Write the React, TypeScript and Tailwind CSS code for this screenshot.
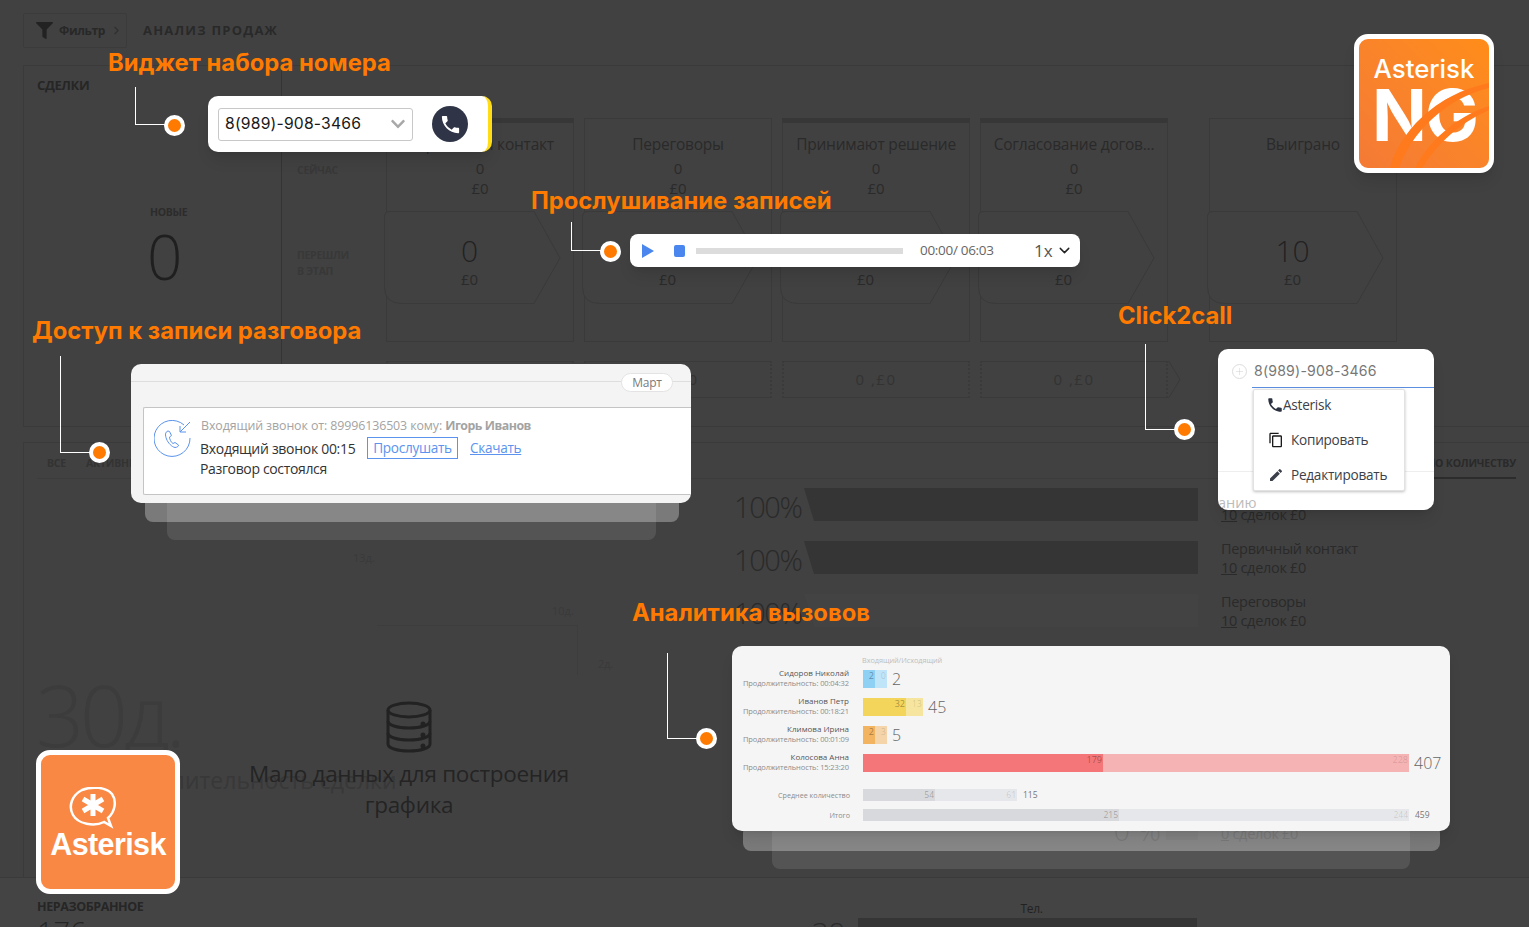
import React from "react";
import { ChevronDown, ChevronRight, Plus } from "lucide-react";
import { FaChevronDown, FaFilter } from "react-icons/fa";
import { MdContentCopy, MdEdit, MdPhone } from "react-icons/md";

const stages = [
  { title: "Первичный контакт", moved: "0", bar: true },
  { title: "Переговоры", moved: "0", bar: false },
  { title: "Принимают решение", moved: "0", bar: true },
  { title: "Согласование догов...", moved: "0", bar: true },
];

const ArrowBox = ({ value }: { value: string }) => (
  <div className="relative -ml-[3px] flex h-[93px] w-[177px] flex-col items-center pr-[6px] pt-[22px]">
    <svg className="absolute inset-0" width="177" height="93" viewBox="0 0 177 93" fill="none">
      <path d="M6 .5H150L176 47 150 92.5H18Q.5 92.5 .5 76V6Q.5 .5 6 .5Z" stroke="#3a3a3a" fill="#414141" />
    </svg>
    <span className="relative text-[30px] leading-[36px] font-light text-[#222222]">{value}</span>
    <span className="relative text-[15px] leading-[20px] text-[#2a2a2a]">£0</span>
  </div>
);

const StageColumn = ({
  title,
  moved,
  bar,
  won,
}: {
  title: string;
  moved: string;
  bar: boolean;
  won?: boolean;
}) => (
  <div className={`h-[224px] w-[188px] border border-[#3a3a3a] ${bar ? "border-t-[5px] border-t-[#373737]" : ""}`}>
    <div className={`flex flex-col items-center ${bar ? "h-[88px] pt-[11px]" : "h-[92px] pt-[15px]"}`}>
      <span className="text-[15.5px] leading-[20px] tracking-[-0.22px] whitespace-nowrap text-[#2a2a2a]">{title}</span>
      {!won && (
        <>
          <span className="mt-[4px] text-[15px] leading-[20px] text-[#2a2a2a]">0</span>
          <span className="text-[15px] leading-[20px] text-[#2a2a2a]">£0</span>
        </>
      )}
    </div>
    <ArrowBox value={moved} />
  </div>
);

const FunnelBar = ({ faded }: { faded?: boolean }) => (
  <div className="flex h-[33px] items-center">
    <span className="mt-[4px] w-[70px] text-[29px] font-light tracking-[-1.4px] text-[#2a2a2a]">100%</span>
    <div
      className={`h-[33px] flex-1 [clip-path:polygon(0_0,100%_0,100%_100%,10px_100%)] ${faded ? "bg-[#434343]" : "bg-[#353535]"}`}
    />
  </div>
);

const DealsLine = ({ title, count }: { title?: string; count: string }) => (
  <div className="-ml-[1px] text-[14.5px] leading-[19px] tracking-[-0.3px] text-[#2a2a2a]">
    {title && <div>{title}</div>}
    <div>
      <span className="underline">{count}</span> сделок £0
    </div>
  </div>
);

const Background = () => (
  <div className="flex h-[927px] flex-col pl-[23px] pt-[13px] font-['Open_Sans',sans-serif]">
    <div className="flex shrink-0 items-center gap-[16px]">
      <div className="flex h-[35px] w-[104px] items-center rounded-[2px] border border-[#3b3b3b] pl-[12px] text-[#222222]">
        <FaFilter size={17} />
        <span className="ml-[6px] text-[12px] font-bold tracking-[-0.4px] text-[#282828]">Фильтр</span>
        <ChevronRight size={13} className="ml-[5px] text-[#2f2f2f]" />
      </div>
      <span className="text-[13px] font-bold tracking-[1.2px] text-[#292929]">АНАЛИЗ ПРОДАЖ</span>
    </div>

    <div className="mt-[17px] flex h-[362px] shrink-0 border-t border-l border-b border-[#3a3a3a]">
      <div className="flex w-[258px] flex-col border-r border-[#343434] pl-[13px] pt-[10px]">
        <span className="text-[13px] font-bold tracking-[-0.4px] text-[#262626]">СДЕЛКИ</span>
        <span className="mt-[109px] ml-[113px] text-[10.5px] font-bold tracking-[-0.3px] text-[#2c2c2c]">НОВЫЕ</span>
        <span className="ml-[110px] text-[62px] leading-[72px] font-light text-[#1f1f1f]">0</span>
      </div>
      <div className="flex-1 pl-[15px] pt-[52px]">
        <div className="flex">
          <div className="w-[89px] pt-[44px] text-[10.5px] leading-[16px] font-bold tracking-[-0.3px] text-[#383838]">
            <div>СЕЙЧАС</div>
            <div className="mt-[69px]">ПЕРЕШЛИ</div>
            <div>В ЭТАП</div>
          </div>
          <div className="flex gap-[10px]">
            {stages.map((s) => (
              <StageColumn key={s.title} {...s} />
            ))}
          </div>
          <div className="ml-[41px]">
            <StageColumn title="Выиграно" moved="10" bar={false} won />
          </div>
        </div>
        <div className="ml-[89px] mt-[19px] flex items-center gap-[10px]">
          {["0 ,£0", "0 ,£0", "0 ,£0", "0 ,£0"].map((v, i) => (
            <div
              key={i}
              className="flex h-[37px] w-[188px] items-center justify-center border-y border-x-2 border-y-[#3a3a3a] border-x-[#3a3a3a] [border-left-style:dotted] [border-right-style:dotted] text-[15px] tracking-[1.5px] text-[#333333]"
            >
              {v}
            </div>
          ))}
          <svg className="-ml-[10px]" width="13" height="37" viewBox="0 0 13 37" fill="none" stroke="#3a3a3a">
            <path d="M0 .5H1L12 18.5 1 36.5H0" />
          </svg>
        </div>
      </div>
    </div>

    <div className="mt-[15px] flex h-[435px] shrink-0 flex-col border-t border-l border-[#3a3a3a]">
      <div className="mx-[13px] flex h-[36px] items-start justify-between border-b border-[#3c3c3c] pt-[13px] text-[10.5px] font-bold tracking-[-0.2px] text-[#333333]">
        <div className="flex gap-[20px] pl-[10px]">
          <span>ВСЕ</span>
          <span>АКТИВНЫЕ</span>
        </div>
        <span className="h-[23px] border-b-[2px] border-[#2c2c2c] text-[#2a2a2a]">ПО КОЛИЧЕСТВУ</span>
      </div>
      <div className="flex flex-1">
        <div className="relative w-[710px]">
          <span className="absolute left-[329px] top-[71px] text-[11px] text-[#3a3a3a]">13д.</span>
          <span className="absolute left-[528px] top-[124px] text-[11px] text-[#3a3a3a]">10д.</span>
          <span className="absolute left-[574px] top-[177px] text-[11px] text-[#3a3a3a]">2д.</span>
          <div className="absolute left-[353px] top-[146px] h-[50px] w-[201px] border-t border-r border-[#3d3d3d]" />
          <div className="flex h-full pt-[186px]">
            <div className="w-[420px] pl-[12px]">
              <div className="text-[84px] leading-[100px] font-light tracking-[-4px] text-[#3c3c3c]">30д.</div>
              <div className="ml-[120px] text-[23px] leading-[30px] whitespace-nowrap text-[#383838]">
                Длительность сделки
              </div>
            </div>
          </div>
          <div className="absolute left-[210px] top-[222px] flex w-[350px] flex-col items-center">
            <svg width="46" height="52" viewBox="0 0 46 52" fill="none" stroke="#222222" strokeWidth="3">
              <ellipse cx="23" cy="9" rx="21" ry="7" />
              <path d="M2 9V43C2 47 11 50 23 50S44 47 44 43V9" />
              <path d="M2 20C2 24 11 27 23 27S44 24 44 20" />
              <path d="M2 32C2 36 11 39 23 39S44 36 44 32" />
              <circle cx="37" cy="23" r="1" fill="#222222" />
              <circle cx="37" cy="34" r="1" fill="#222222" />
              <circle cx="37" cy="45" r="1" fill="#222222" />
            </svg>
            <div className="mt-[5px] whitespace-nowrap text-center text-[22.5px] leading-[31px] tracking-[-0.3px] text-[#242424]">
              Мало данных для построения
              <br />
              графика
            </div>
          </div>
        </div>
        <div className="w-[464px] pt-[9px]">
          <div className="flex flex-col gap-[20px]">
            <FunnelBar />
            <FunnelBar />
            <FunnelBar faded />
          </div>
          <div className="mt-[193px] flex h-[20px] items-center justify-end">
            <span className="mr-[5px] text-[29px] font-light text-[#2c2c2c]">0 %</span>
            <div className="h-[20px] w-[32px] bg-[#3a3a3a]" />
          </div>
        </div>
        <div className="ml-[24px] pt-[26px]">
          <DealsLine count="10" />
          <div className="mt-[15px]">
            <DealsLine title="Первичный контакт" count="10" />
          </div>
          <div className="mt-[15px]">
            <DealsLine title="Переговоры" count="10" />
          </div>
          <div className="mt-[194px]">
            <DealsLine count="0" />
          </div>
        </div>
      </div>
    </div>

    <div className="-ml-[23px] min-h-0 flex-1 overflow-hidden border-t border-[#3a3a3a] bg-[#444444] pl-[37px] pt-[20px]">
      <div className="flex">
        <div className="w-[775px]">
          <div className="text-[12.5px] font-bold tracking-[-0.4px] text-[#262626]">НЕРАЗОБРАННОЕ</div>
          <div className="text-[29px] leading-[30px] font-light text-[#262626]">176</div>
        </div>
        <div className="flex w-[385px] flex-col items-center">
          <span className="ml-[54px] mt-[2px] text-[12px] tracking-[-0.3px] text-[#222222]">Тел.</span>
          <div className="flex w-full items-start gap-[13px]">
            <span className="text-[29px] leading-[30px] font-light text-[#2c2c2c]">38</span>
            <div className="h-[20px] flex-1 bg-[#353535]" />
          </div>
        </div>
      </div>
    </div>
  </div>
);

const Callout = ({ line, dot }: { line: string; dot: string }) => (
  <>
    <div className={`absolute border-b border-l border-white ${line}`} />
    <div
      className={`absolute h-[21px] w-[21px] rounded-full border-[4px] border-white bg-[#ff7a00] ${dot}`}
    />
  </>
);

const Title = ({ className, children }: { className: string; children: React.ReactNode }) => (
  <div
    className={`absolute text-[23.8px] leading-[28px] font-bold whitespace-nowrap text-[#ff7a00] font-['Inter',sans-serif] ${className}`}
  >
    {children}
  </div>
);

const DialWidget = () => (
  <div className="absolute left-[208px] top-[96px] flex h-[56px] w-[284px] items-center rounded-[10px] border-r-[4px] border-[#ffdc14] bg-white pl-[10px] shadow-lg font-['Inter',sans-serif]">
    <div className="flex h-[33px] w-[195px] items-center justify-between rounded-[3px] border border-[#c8c8c8] px-[6px]">
      <span className="text-[15.7px] tracking-[0.2px] text-[#1a1a1a]">8(989)-908-3466</span>
      <FaChevronDown size={16} className="text-[#a8a8a8]" />
    </div>
    <div className="ml-[19px] flex h-[36px] w-[36px] items-center justify-center rounded-full bg-[#2f3547]">
      <MdPhone size={23} className="text-white" />
    </div>
  </div>
);

const Player = () => (
  <div className="absolute left-[630px] top-[234px] flex h-[33px] w-[450px] items-center rounded-[8px] bg-white pl-[12px] shadow-lg font-['Open_Sans',sans-serif]">
    <div className="h-0 w-0 border-y-[7px] border-l-[12px] border-y-transparent border-l-[#4a86ee]" />
    <div className="ml-[20px] h-[12px] w-[11px] rounded-[2px] bg-[#4a86ee]" />
    <div className="ml-[11px] h-[6px] w-[207px] bg-[#dcdcdc]" />
    <span className="ml-[17px] w-[114px] text-[13.5px] tracking-[-0.3px] whitespace-nowrap text-[#666666]">
      00:00/ 06:03
    </span>
    <span className="text-[17px] text-[#555555]">1x</span>
    <ChevronDown size={17} className="ml-[3px] text-[#222222]" />
  </div>
);

const RecordCard = () => (
  <>
    <div className="absolute left-[167px] top-[495px] h-[45px] w-[489px] rounded-[8px] bg-white/10" />
    <div className="absolute left-[145px] top-[495px] h-[27px] w-[534px] rounded-[8px] bg-white/30" />
    <div className="absolute left-[131px] top-[364px] h-[139px] w-[560px] overflow-hidden rounded-[10px] bg-[#f4f4f4] pl-[12px] font-['Open_Sans',sans-serif]">
      <div className="relative h-[43px]">
        <div className="absolute -left-[12px] right-0 top-[17px] border-t border-[#dedede]" />
        <span className="absolute right-[18px] top-[9px] flex h-[19px] w-[52px] items-center justify-center rounded-full border border-[#e3e3e3] bg-white text-[12px] tracking-[-0.3px] text-[#7a7a7a]">
          Март
        </span>
      </div>
      <div className="flex h-[88px] gap-[8px] rounded-l-[2px] border border-r-0 border-[#c4c4c4] bg-white pl-[10px] pt-[10px]">
        <svg width="38" height="38" viewBox="0 0 38 38" fill="none" stroke="#5b93ee" strokeWidth="1" className="mt-[2px] shrink-0">
          <path d="M30 5A18 18 0 1 0 36 18" />
          <path d="M36 2 26 12M26 6V12H32" />
          <path d="M14 11C11 12 11 15 12.5 19S18 27 21 27.5C23 27.5 25 26 24.5 25L21 22.5 19 23.5C17 22.5 15.5 19 15.5 17L17.5 15.5 15.5 11.5Z" />
        </svg>
        <div>
          <div className="pl-[1px] text-[12.4px] leading-[16px] tracking-[-0.1px] whitespace-nowrap text-[#a3a3a3]">
            Входящий звонок от: 89996136503 кому: <b className="tracking-[-0.5px]">Игорь Иванов</b>
          </div>
          <div className="mt-[3px] flex items-center text-[14px] tracking-[-0.3px] text-[#333333]">
            <span className="w-[167px] whitespace-nowrap">Входящий звонок 00:15</span>
            <span className="flex h-[22px] w-[91px] items-center justify-center border border-[#5b93ee] text-[13.6px] text-[#5b93ee]">
              Прослушать
            </span>
            <span className="ml-[12px] text-[13.6px] text-[#5b93ee] underline">Скачать</span>
          </div>
          <div className="text-[14px] leading-[20px] tracking-[-0.35px] text-[#333333]">Разговор состоялся</div>
        </div>
      </div>
    </div>
  </>
);

const Click2Call = () => (
  <div className="absolute left-[1218px] top-[349px] h-[161px] w-[216px] overflow-hidden rounded-[10px] bg-white font-['Open_Sans',sans-serif] shadow-lg">
    <div className="ml-[14px] mt-[13px] flex items-center">
      <span className="flex h-[15px] w-[15px] items-center justify-center rounded-full border border-[#dddddd]">
        <Plus size={11} strokeWidth={1} className="text-[#cccccc]" />
      </span>
      <span className="ml-[7px] text-[14.1px] leading-[18px] tracking-[0.2px] text-[#777777] font-['Inter',sans-serif]">
        8(989)-908-3466
      </span>
    </div>
    <div className="ml-[34px] mt-[7px] border-t border-[#5b8fe0]" />
    <div className="relative z-10 ml-[35px] mt-[1px] flex h-[102px] w-[152px] flex-col justify-between rounded-[2px] border border-[#e2e2e2] bg-white py-[5px] pl-[14px] text-[13.6px] tracking-[-0.25px] text-[#3b3f4a] shadow-[0_1px_3px_rgba(0,0,0,0.25)]">
      <div className="flex items-center">
        <MdPhone size={18} className="-ml-[2px] -mr-[1px] text-[#2b3140]" />
        <span>Asterisk</span>
      </div>
      <div className="flex items-center gap-[7px]">
        <MdContentCopy size={16} className="text-[#1a1a1a]" />
        <span>Копировать</span>
      </div>
      <div className="flex items-center gap-[7px]">
        <MdEdit size={16} className="text-[#3b3f4a]" />
        <span>Редактировать</span>
      </div>
    </div>
    <div className="absolute inset-x-0 top-[122px] border-t border-[#eeeeee]" />
    <div className="absolute left-0 top-[145px] text-[14.5px] leading-[18px] text-[#bbbbbb]">анию</div>
  </div>
);

type CallRow = {
  name: string;
  time: string;
  inWidth: string;
  outWidth: string;
  dark: string;
  light: string;
  a: string;
  b: string;
  total: string;
};

const callRows: CallRow[] = [
  { name: "Сидоров Николай", time: "00:04:32", inWidth: "w-[12px]", outWidth: "w-[12px]", dark: "bg-[#8fd0f5]", light: "bg-[#c0e4f8]", a: "2", b: "0", total: "2" },
  { name: "Иванов Петр", time: "00:18:21", inWidth: "w-[43px]", outWidth: "w-[17px]", dark: "bg-[#f3d55c]", light: "bg-[#f6e59f]", a: "32", b: "13", total: "45" },
  { name: "Климова Ирина", time: "00:01:09", inWidth: "w-[12px]", outWidth: "w-[12px]", dark: "bg-[#f3b461]", light: "bg-[#f4d4a8]", a: "2", b: "3", total: "5" },
  { name: "Колосова Анна", time: "15:23:20", inWidth: "w-[240px]", outWidth: "w-[306px]", dark: "bg-[#f57678]", light: "bg-[#f6b3b3]", a: "179", b: "228", total: "407" },
];

const Analytics = () => (
  <>
    <div className="absolute left-[772px] top-[825px] h-[44px] w-[638px] rounded-[8px] bg-white/10" />
    <div className="absolute left-[743px] top-[825px] h-[26px] w-[697px] rounded-[8px] bg-white/30" />
    <div className="absolute left-[732px] top-[646px] h-[185px] w-[718px] rounded-[10px] bg-[#f5f5f5] pt-[9px] font-['Open_Sans',sans-serif] shadow-lg">
      <div className="ml-[130px] text-[7.3px] leading-[10px] tracking-[-0.05px] text-[#bdbdbd]">Входящий/Исходящий</div>
      <div className="mt-[5px] flex flex-col gap-[10px]">
        {callRows.map((r) => (
          <div key={r.name} className="flex h-[18px] items-center">
            <div className="-mt-[2px] w-[117px] text-right whitespace-nowrap">
              <div className="text-[8px] leading-[10px] text-[#555555]">{r.name}</div>
              <div className="text-[7.5px] leading-[10px] tracking-[-0.1px] text-[#8c8c8c]">Продолжительность: {r.time}</div>
            </div>
            <div className="ml-[14px] flex h-[18px] text-[9px] leading-[12px]">
              <div className={`${r.inWidth} ${r.dark} pr-[1px] text-right text-[#00000055]`}>{r.a}</div>
              <div className={`${r.outWidth} ${r.light} pr-[1px] text-right text-[#00000022]`}>{r.b}</div>
            </div>
            <span className="ml-[5px] text-[16px] font-light text-[#666666]">{r.total}</span>
          </div>
        ))}
      </div>
      <div className="mt-[17px] flex h-[12px] items-center">
        <div className="w-[118px] text-right text-[7.2px] text-[#8c8c8c]">Среднее количество</div>
        <div className="ml-[13px] flex h-[12px] text-[8.5px] leading-[12px]">
          <div className="w-[72px] bg-[#d8d9dd] pr-[1px] text-right text-[#00000044]">54</div>
          <div className="w-[82px] bg-[#e6e7ea] pr-[1px] text-right text-[#00000022]">61</div>
        </div>
        <span className="ml-[6px] text-[8.5px] text-[#777777]">115</span>
      </div>
      <div className="mt-[8px] flex h-[12px] items-center">
        <div className="w-[118px] text-right text-[7.2px] text-[#8c8c8c]">Итого</div>
        <div className="ml-[13px] flex h-[12px] text-[8.5px] leading-[12px]">
          <div className="w-[256px] bg-[#d8d9dd] pr-[1px] text-right text-[#00000044]">215</div>
          <div className="w-[290px] bg-[#e6e7ea] pr-[1px] text-right text-[#00000022]">244</div>
        </div>
        <span className="ml-[6px] text-[8.5px] text-[#777777]">459</span>
      </div>
    </div>
  </>
);

const NgLogo = () => (
  <div className="absolute left-[1354px] top-[34px] h-[139px] w-[140px] overflow-hidden rounded-[14px] border-[5px] border-white bg-gradient-to-tr from-[#f47a35] to-[#ff8d18] font-['Inter',sans-serif] shadow-lg">
    <div className="mt-[15px] text-center text-[25.8px] leading-[30px] font-medium text-white">Asterisk</div>
    <div className="-mt-[2px] ml-[13px] text-[72px] leading-[66px] font-bold tracking-[-2px] text-white">NG</div>
    <svg className="absolute inset-0" width="130" height="129" viewBox="0 0 130 129" fill="none">
      <path d="M31 129C40 95 75 55 130 44V49C85 60 52 95 40 129Z" fill="#ff7a1c" />
      <path d="M56 129C68 105 95 78 130 67V71C100 84 78 105 63 129Z" fill="#ff7a1c" />
    </svg>
  </div>
);

const AsteriskLogo = () => (
  <div className="absolute left-[36px] top-[750px] flex h-[144px] w-[144px] flex-col items-center rounded-[14px] border-[5px] border-white bg-[#f98844]">
    <svg className="mr-[30px] mt-[32px]" width="50" height="42" viewBox="0 0 50 42" fill="none">
      <path
        d="M36 35C26 40 10 37 5 28 0 19 4 8 14 3 24-1 38 0 44 7 49 14 47 25 40 31L43 39Z"
        stroke="white"
        strokeWidth="2.5"
      />
      <path d="M25 7V29M15 12 35 24M35 12 15 24" stroke="white" strokeWidth="5" />
    </svg>
    <div className="-mt-[3px] text-[30.5px] leading-[36px] font-bold tracking-[-0.6px] text-white font-['Liberation_Sans',sans-serif]">
      Asterisk
    </div>
  </div>
);

export default function App() {
  return (
    <div className="relative h-[927px] w-[1529px] overflow-hidden bg-[#414141]">
      <Background />

      <Title className="left-[108px] top-[49px]">Виджет набора номера</Title>
      <Title className="left-[531px] top-[187px]">Прослушивание записей</Title>
      <Title className="left-[32px] top-[317px]">Доступ к записи разговора</Title>
      <Title className="left-[1118px] top-[302px]">Click2call</Title>
      <Title className="left-[632px] top-[599px]">Аналитика вызовов</Title>

      <Callout line="left-[135px] top-[87px] h-[38px] w-[30px]" dot="left-[164px] top-[115px]" />
      <Callout line="left-[571px] top-[222px] h-[29px] w-[30px]" dot="left-[600px] top-[241px]" />
      <Callout line="left-[60px] top-[356px] h-[97px] w-[30px]" dot="left-[89px] top-[442px]" />
      <Callout line="left-[1145px] top-[344px] h-[86px] w-[30px]" dot="left-[1174px] top-[419px]" />
      <Callout line="left-[667px] top-[653px] h-[86px] w-[30px]" dot="left-[696px] top-[728px]" />

      <DialWidget />
      <Player />
      <RecordCard />
      <Click2Call />
      <Analytics />
      <NgLogo />
      <AsteriskLogo />
    </div>
  );
}
